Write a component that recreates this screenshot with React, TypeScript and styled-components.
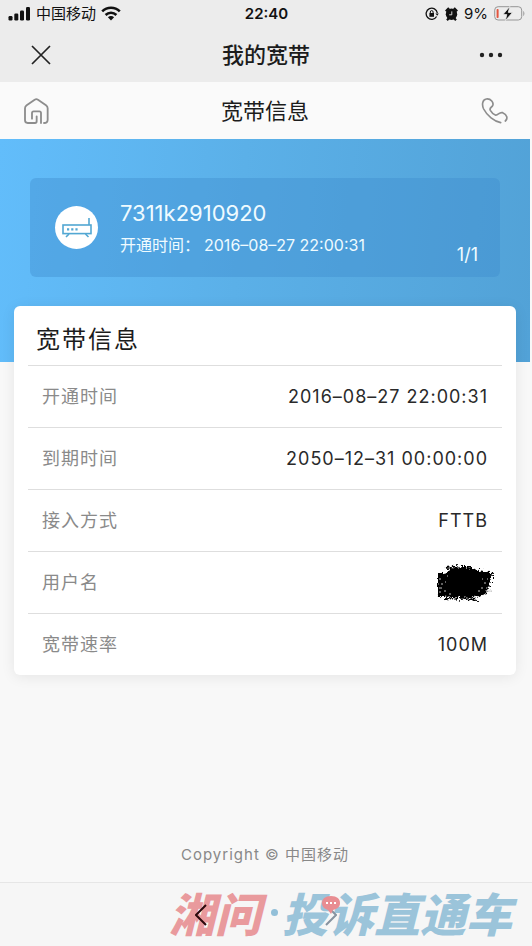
import React from "react";
import styled, { createGlobalStyle } from "styled-components";

const GlobalStyle = createGlobalStyle`
  *, *::before, *::after { box-sizing: border-box; }
  html, body { margin: 0; padding: 0; background: #f8f8f8; }
  body { font-family: Inter, "Noto Sans CJK SC", sans-serif; color: #222; }
  h1, h2, p, dl, dt, dd { margin: 0; font-weight: 400; }
  svg { display: block; }
`;

const Screen = styled.div`
  display: flex;
  flex-direction: column;
  min-height: 100vh;
`;

const StatusBar = styled.header`
  display: grid;
  grid-template-columns: 1fr auto 1fr;
  align-items: center;
  height: 27px;
  padding: 0 7px 0 8px;
  background: #ececec;
  color: #111;
  font-size: 15px;
  line-height: 20px;
`;

const StatusGroup = styled.div<{ $end?: boolean }>`
  display: flex;
  align-items: center;
  gap: ${(p) => (p.$end ? "6px" : "5px")};
  justify-content: ${(p) => (p.$end ? "flex-end" : "flex-start")};
`;

const Clock = styled.time`
  font-weight: 600;
`;

const TopBar = styled.div<{ $tone: "grey" | "light" }>`
  display: grid;
  grid-template-columns: 48px 1fr 48px;
  align-items: center;
  height: ${(p) => (p.$tone === "grey" ? "55px" : "57px")};
  padding: ${(p) => (p.$tone === "grey" ? "0 17px" : "0 12px")};
  background: ${(p) => (p.$tone === "grey" ? "#ececec" : "#fafafa")};
`;

const BarTitle = styled.h1<{ $strong?: boolean }>`
  text-align: center;
  font-size: 22px;
  line-height: 32px;
  font-weight: ${(p) => (p.$strong ? 500 : 400)};
  color: #1c1c1c;
`;

const IconButton = styled.button`
  position: relative;
  display: flex;
  align-items: center;
  justify-content: center;
  width: 48px;
  height: 48px;
  padding: 0;
  border: 0;
  background: none;
  color: inherit;
  cursor: pointer;
`;

const PhoneLink = styled.a`
  display: flex;
  align-items: center;
  justify-content: center;
  width: 48px;
  height: 48px;
`;

const Page = styled.main`
  display: flex;
  flex: 1;
  flex-direction: column;
  margin-right: 2px;
`;

const Hero = styled.section`
  padding: 39px 30px 85px;
  background: linear-gradient(95deg, #62bdfb 0%, #5bb0e8 45%, #52a2d7 100%);
`;

const Account = styled.div`
  display: flex;
  align-items: center;
  gap: 22px;
  height: 99px;
  padding: 0 22px 0 25px;
  border-radius: 6px;
  background: rgba(62, 140, 204, 0.4);
  color: #effbff;
`;

const Badge = styled.div`
  display: flex;
  align-items: center;
  justify-content: center;
  width: 43px;
  height: 43px;
  border-radius: 50%;
  background: #fff;
`;

const AccountText = styled.div`
  flex: 1;
  padding-top: 2px;
`;

const AccountName = styled.p`
  font-size: 22px;
  line-height: 32px;
`;

const AccountDate = styled.p`
  display: flex;
  gap: 4px;
  font-size: 16px;
  line-height: 32px;
  white-space: nowrap;
`;

const Counter = styled.p`
  align-self: flex-end;
  padding-bottom: 10px;
  font-size: 18px;
  line-height: 24px;
`;

const Card = styled.section`
  margin: -56px 14px 0;
  padding: 0 14px;
  border-radius: 6px;
  background: #fff;
  box-shadow: 0 2px 14px rgba(0, 0, 0, 0.08);
`;

const CardTitle = styled.h2`
  height: 59px;
  padding: 4px 8px 0;
  font-size: 24px;
  line-height: 59px;
  letter-spacing: 2px;
  color: #1c1c1c;
`;

const Row = styled.div`
  display: flex;
  align-items: center;
  justify-content: space-between;
  height: 62px;
  padding: 0 14px;
  border-top: 1px solid #dedede;
  font-size: 18px;
  line-height: 24px;
  letter-spacing: 1px;
`;

const Label = styled.dt`
  color: #8a8a8a;
`;

const Value = styled.dd`
  color: #2a2a2a;
`;

const Redacted = styled.dd`
  margin-right: -8px;
`;

const Copyright = styled.footer`
  margin-top: auto;
  padding-bottom: 15px;
  text-align: center;
  font-size: 15px;
  line-height: 24px;
  letter-spacing: 1px;
  color: #888;
`;

const BottomBar = styled.nav`
  position: relative;
  display: flex;
  align-items: center;
  justify-content: center;
  gap: 82px;
  height: 64px;
  border-top: 1px solid #e6e6e6;
  background: #f6f6f6;
`;

const Watermark = styled.div`
  position: absolute;
  right: 20px;
  bottom: 6px;
  display: flex;
  align-items: center;
  font-family: "Noto Sans CJK SC", sans-serif;
  font-size: 46px;
  font-weight: 900;
  font-style: italic;
  line-height: 56px;
  white-space: nowrap;
  pointer-events: none;
`;

const Mark = styled.span<{ $color: string }>`
  color: ${(p) => p.$color};
`;

const Dot = styled.span`
  width: 7px;
  height: 7px;
  margin: 0 4px 0 10px;
  border-radius: 50%;
  background: #92bfd8;
`;

const Bubble = styled.svg`
  position: absolute;
  left: 14px;
  top: 5px;
`;

const SignalIcon = () => (
  <svg width="23" height="15" viewBox="0 0 23 15" fill="#111" aria-hidden="true">
    <rect x="0.5" y="10" width="4" height="4.5" rx="1.2" />
    <rect x="6.3" y="7.5" width="4" height="7" rx="1.2" />
    <rect x="12" y="4.5" width="4" height="10" rx="1.2" />
    <rect x="18" y="1" width="4" height="13.5" rx="1.2" />
  </svg>
);

const WifiIcon = () => (
  <svg width="20" height="15" viewBox="0 0 20 15" fill="none" stroke="#111" strokeWidth="2.6" aria-hidden="true">
    <path d="M1.2 5.4C6.2.5 13.8.5 18.8 5.4" />
    <path d="M4.6 9C7.7 6 12.3 6 15.4 9" />
    <path d="M10 14.5 6.9 11.3C8.7 9.7 11.3 9.7 13.1 11.3Z" fill="#111" stroke="none" />
  </svg>
);

const LockIcon = () => (
  <svg width="14" height="14" viewBox="0 0 14 14" fill="none" stroke="#111" strokeWidth="1.3" aria-hidden="true">
    <path d="M11.6 9.5A5.6 5.6 0 1 1 12.3 6" />
    <path d="M10.4 6.4h3.4l-1.6 2.4Z" fill="#111" stroke="none" />
    <rect x="4.4" y="6" width="4.6" height="3.8" fill="#111" stroke="none" />
    <path d="M5.3 6.2V5a1.4 1.4 0 0 1 2.8 0v1.2" strokeWidth="1" />
  </svg>
);

const AlarmIcon = () => (
  <svg width="13" height="14" viewBox="0 0 13 14" aria-hidden="true">
    <circle cx="6.5" cy="7.3" r="5.7" fill="#111" />
    <path d="M.8 4.2 4 1M12.2 4.2 9 1M2 13.2l1.8-2M11 13.2l-1.8-2" stroke="#111" strokeWidth="2.2" />
    <path d="M6.8 4.4v3.400H4.200" fill="none" stroke="#ececec" strokeWidth="0.9" />
  </svg>
);

const BatteryIcon = () => (
  <svg width="31" height="15" viewBox="0 0 31 15" aria-hidden="true">
    <rect x="0.7" y="0.7" width="27" height="13.3" rx="3.4" fill="none" stroke="#969696" strokeWidth="1" />
    <path d="M29.3 5v5c1.4-.6 1.4-4.4 0-5Z" fill="#969696" />
    <rect x="2.6" y="3" width="2" height="9" rx="0.8" fill="#e4553f" />
    <path d="M15.8.4 9 8.600h3.800l-1.500 6.200 7.200-8.400h-4.200Z" fill="#111" stroke="#ececec" strokeWidth="0.8" />
  </svg>
);

const CloseIcon = () => (
  <svg width="20" height="20" viewBox="0 0 20 20" stroke="#222" strokeWidth="1.7" aria-hidden="true">
    <path d="M1 1 19 19M19 1 1 19" />
  </svg>
);

const MoreIcon = () => (
  <svg width="24" height="6" viewBox="0 0 24 6" fill="#222" aria-hidden="true">
    <circle cx="3" cy="3" r="2.2" />
    <circle cx="12" cy="3" r="2.2" />
    <circle cx="21" cy="3" r="2.2" />
  </svg>
);

const HomeIcon = () => (
  <svg width="27" height="28" viewBox="0 0 81 84" fill="none" stroke="#8d8d8d" strokeWidth="5.500" strokeLinecap="round" strokeLinejoin="round" aria-hidden="true">
    <path d="M63 78Q74 78 74 68V34Q74 29 69 25L45 8Q40 5 35 8L11 25Q6 29 6 34V70Q6 78 14 78H36Q41 78 41 73V58" />
    <path d="M27 65V48Q27 43 32 43H49Q54 43 54 48V78" />
  </svg>
);

const PhoneIcon = () => (
  <svg width="27" height="28" viewBox="0 0 81 84" fill="none" stroke="#8d8d8d" strokeWidth="5" strokeLinecap="round" strokeLinejoin="round" aria-hidden="true">
    <path d="M59 77C40 73 18 56 8 36 2 23 4 8 16 6 30 4 39 18 35 26 32 32 24 32 28 40 32 47 38 52 43 54 51 57 54 44 65 47 79 53 81 65 73 72" />
  </svg>
);

const RouterIcon = () => (
  <svg width="32" height="21" viewBox="0 0 32 21" fill="none" stroke="#52a7d3" strokeWidth="1.6" aria-hidden="true">
    <path d="M28 8V1" />
    <rect x="2" y="8" width="28" height="8.6" />
    <path d="M8 17 5 20M24.5 17 27.5 20" />
    <path d="M6 12.300h2.200M10.200 12.300h2.200M14.400 12.300h2.200" strokeWidth="2.2" />
  </svg>
);

const Scribble = () => (
  <svg width="60" height="38" viewBox="0 0 60 38" role="img" aria-label="已隐藏">
    <defs>
      <filter id="rough" x="0" y="0" width="60" height="38" filterUnits="userSpaceOnUse">
        <feTurbulence type="fractalNoise" baseFrequency="0.35" numOctaves="2" seed="4" />
        <feDisplacementMap in="SourceGraphic" scale="7" xChannelSelector="R" yChannelSelector="G" />
      </filter>
    </defs>
    <g filter="url(#rough)" fill="#000" stroke="#000">
      <path d="M2 11 11 9 14 4 28 3 42 6 54 8 55 11 50 30 43 32 38 34 12 33 2 31Z" stroke="none" />
      <path d="M44 9 58 10M47 13 58 13M46 17 57 18M45 21 56 22M44 25 54 27M10 4 22 2M26 3 36 3M8 34 42 36" strokeWidth="1.8" strokeDasharray="4 1" />
    </g>
    <path d="M2 9H5V32H2Z" fill="#000" />
    <g stroke="#fff" strokeWidth="1" opacity="0.75">
      <path d="M3 15h2M5 20h2M3 24h3M9 18h1M8 27h2M11 12h1M46 15h1M48 19h2M45 24h2M51 15h1M50 24h1M42 27h2M13 30h2M3 28h2M2 20h1" />
    </g>
  </svg>
);

const ChevronIcon = ({ forward }: { forward?: boolean }) => (
  <svg width="12" height="22" viewBox="0 0 12 22" fill="none" stroke={forward ? "#8793a0" : "#2c090c"} strokeWidth="2" aria-hidden="true">
    <path d={forward ? "M1 1 11 11 1 21" : "M11 1 1 11 11 21"} />
  </svg>
);

const details = [
  { label: "开通时间", value: "2016–08–27 22:00:31" },
  { label: "到期时间", value: "2050–12–31 00:00:00" },
  { label: "接入方式", value: "FTTB" },
  { label: "用户名", value: null },
  { label: "宽带速率", value: "100M" },
];

export default function App() {
  return (
    <Screen>
      <GlobalStyle />
      <StatusBar>
        <StatusGroup>
          <SignalIcon />
          <span>中国移动</span>
          <WifiIcon />
        </StatusGroup>
        <Clock>22:40</Clock>
        <StatusGroup $end>
          <LockIcon />
          <AlarmIcon />
          <span>9%</span>
          <BatteryIcon />
        </StatusGroup>
      </StatusBar>
      <TopBar $tone="grey">
        <IconButton type="button" aria-label="关闭"><CloseIcon /></IconButton>
        <BarTitle $strong>我的宽带</BarTitle>
        <IconButton type="button" aria-label="更多"><MoreIcon /></IconButton>
      </TopBar>
      <Page>
        <TopBar $tone="light">
          <IconButton type="button" aria-label="首页"><HomeIcon /></IconButton>
          <BarTitle as="h2">宽带信息</BarTitle>
          <PhoneLink href="tel:10086" aria-label="电话"><PhoneIcon /></PhoneLink>
        </TopBar>
        <Hero>
          <Account>
            <Badge><RouterIcon /></Badge>
            <AccountText>
              <AccountName>7311k2910920</AccountName>
              <AccountDate>
                <span>开通时间：</span>
                <span>2016–08–27 22:00:31</span>
              </AccountDate>
            </AccountText>
            <Counter>1/1</Counter>
          </Account>
        </Hero>
        <Card>
          <CardTitle>宽带信息</CardTitle>
          <dl>
            {details.map((d) => (
              <Row key={d.label}>
                <Label>{d.label}</Label>
                {d.value ? <Value>{d.value}</Value> : <Redacted><Scribble /></Redacted>}
              </Row>
            ))}
          </dl>
        </Card>
        <Copyright>Copyright © 中国移动</Copyright>
      </Page>
      <BottomBar>
        <Watermark>
          <Mark $color="#e99a9d">湘问</Mark>
          <Dot />
          <Mark $color="#9bc4da">投诉直通车</Mark>
        </Watermark>
        <IconButton type="button" aria-label="后退"><ChevronIcon /></IconButton>
        <IconButton type="button" aria-label="前进">
          <Bubble width="20" height="18" viewBox="0 0 20 18" aria-hidden="true">
            <path d="M10 0C4 0 1 3 1 7s3 6 6 7l3 4 2-4c4-1 7-3 7-7s-3-7-9-7Z" fill="#e88d92" />
            <path d="M5 7h2M9 7h2M13 7h2" stroke="#fff" strokeWidth="2" />
          </Bubble>
          <ChevronIcon forward />
        </IconButton>
      </BottomBar>
    </Screen>
  );
}
